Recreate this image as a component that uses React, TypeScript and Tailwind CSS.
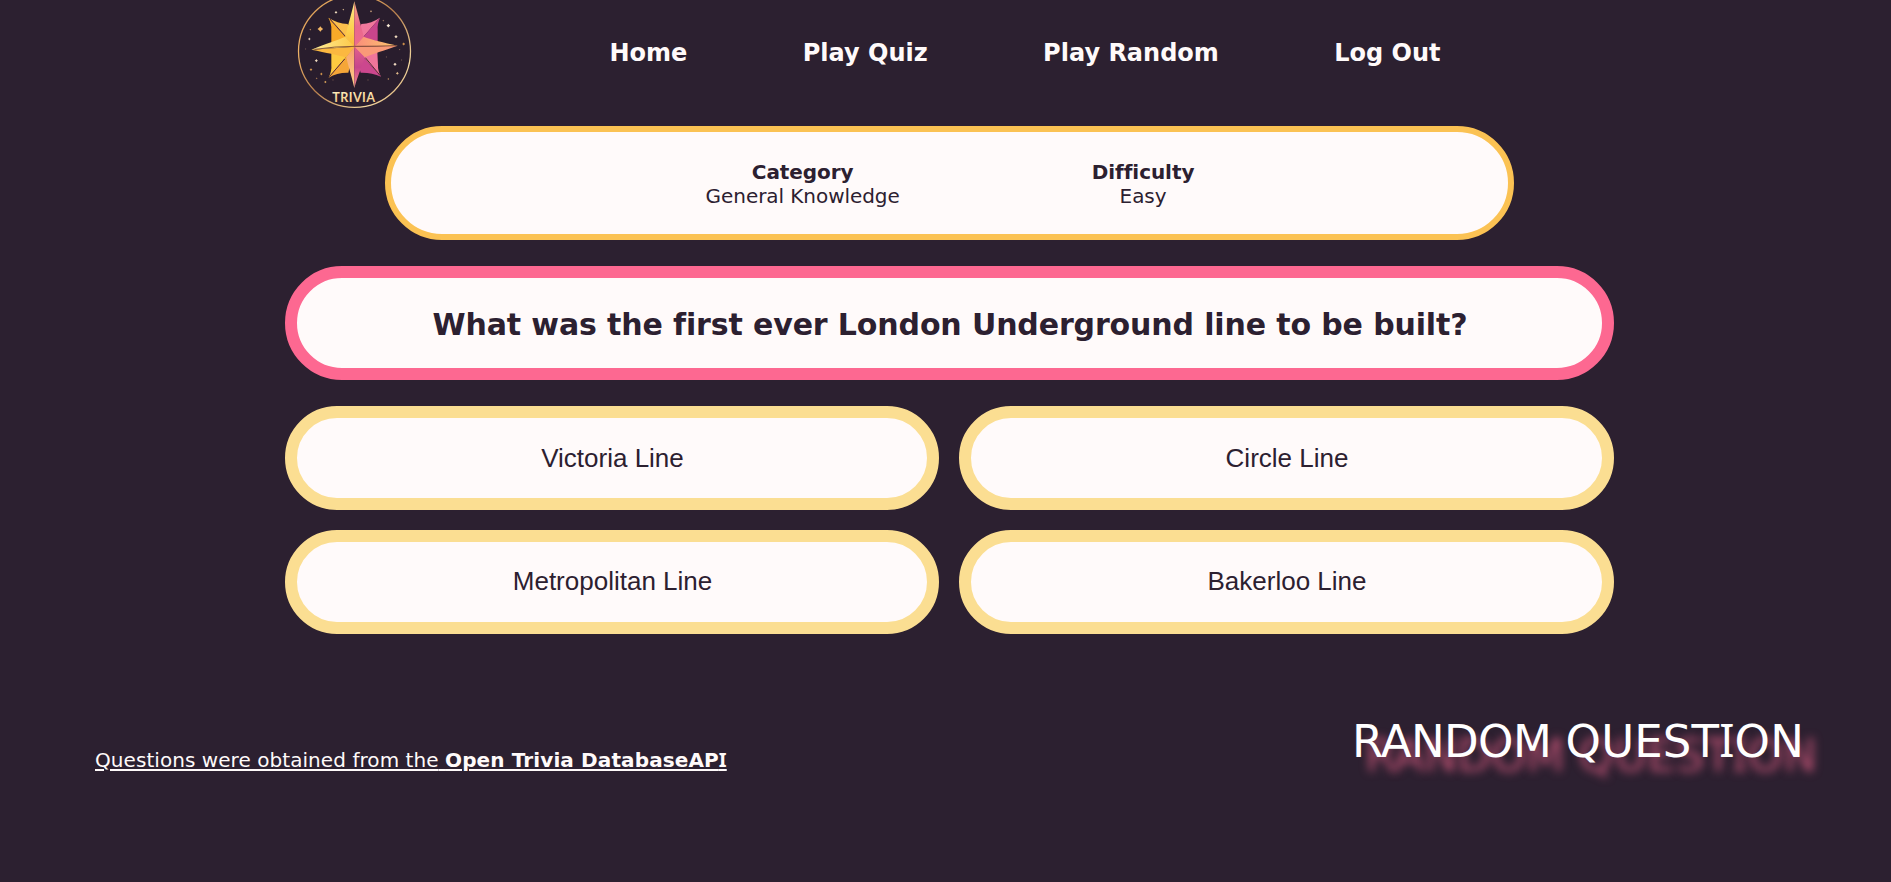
const navLinks = ["Home", "Play Quiz", "Play Random", "Log Out"];
const answerRows = [
  ["Victoria Line", "Circle Line"],
  ["Metropolitan Line", "Bakerloo Line"],
];

const stars: [number, number, number, string][] = [
  [168, 37, 3, "#f6e3c4"], [190, 29, 2, "#d9b98c"], [121, 87, 6, "#f3b765"], [91, 89, 2, "#b98a5c"],
  [88, 117, 3, "#e9d3bd"], [77, 147, 1.5, "#8d6f60"], [109, 182, 3.5, "#f0dcc0"], [93, 209, 3, "#d99a4e"],
  [124, 222, 3, "#d99a4e"], [136, 246, 2.8, "#e0a85c"], [110, 235, 2, "#a97c52"], [159, 240, 1.5, "#96705c"],
  [273, 34, 2.4, "#c9a07c"], [325, 77, 4, "#f8ead6"], [348, 110, 3.6, "#f4dfc2"], [310, 62, 2, "#a07b66"],
  [371, 132, 3.2, "#cf8f4c"], [359, 149, 1.5, "#9b7258"], [345, 193, 3.6, "#f1dcc2"], [352, 220, 3.2, "#e0b98a"],
  [319, 171, 1.5, "#8d6f60"], [325, 237, 2, "#b98a5c"], [264, 240, 1.5, "#96705c"], [365, 180, 1.5, "#8d6f60"],
];

function Logo() {
  return (
    <svg viewBox="0 0 450 360" className="block h-[120px] w-[150px] shrink-0" aria-label="Trivia">
      <defs>
        <linearGradient id="ring" x1="0" y1="0" x2="1" y2="1">
          <stop offset="0" stopColor="#c98a45" />
          <stop offset="0.25" stopColor="#f0b468" />
          <stop offset="0.5" stopColor="#b87f4c" />
          <stop offset="0.8" stopColor="#f4d9a0" />
          <stop offset="1" stopColor="#c58a55" />
        </linearGradient>
        <linearGradient id="topLeft" x1="0" y1="0" x2="0" y2="1">
          <stop offset="0" stopColor="#fde88a" />
          <stop offset="0.6" stopColor="#fdd250" />
          <stop offset="1" stopColor="#fbb83c" />
        </linearGradient>
        <linearGradient id="topRight" x1="0" y1="0" x2="0" y2="1">
          <stop offset="0" stopColor="#fba878" />
          <stop offset="0.55" stopColor="#e9688e" />
          <stop offset="1" stopColor="#ee6c8c" />
        </linearGradient>
        <linearGradient id="west" x1="0" y1="0" x2="1" y2="0">
          <stop offset="0" stopColor="#fff09a" />
          <stop offset="1" stopColor="#fcc848" />
        </linearGradient>
        <linearGradient id="east" x1="0" y1="0" x2="1" y2="0">
          <stop offset="0" stopColor="#fb8c7c" />
          <stop offset="1" stopColor="#fcc86c" />
        </linearGradient>
        <linearGradient id="bottom" x1="0" y1="0" x2="0" y2="1">
          <stop offset="0" stopColor="#f9a06c" />
          <stop offset="1" stopColor="#fbd08a" />
        </linearGradient>
        <linearGradient id="bottomRight" x1="0" y1="0" x2="0" y2="1">
          <stop offset="0" stopColor="#e0608c" />
          <stop offset="0.5" stopColor="#c8458c" />
          <stop offset="1" stopColor="#f58c88" />
        </linearGradient>
        <linearGradient id="word" x1="0" y1="0" x2="0" y2="1">
          <stop offset="0" stopColor="#fff2c4" />
          <stop offset="1" stopColor="#f0c27a" />
        </linearGradient>
      </defs>
      <circle cx="223.5" cy="154" r="168" fill="#291d2d" stroke="url(#ring)" strokeWidth="3.8" />
      {stars.map(([x, y, r, color]) => (
        <path
          key={`${x}-${y}`}
          fill={color}
          d={`M${x} ${y - r * 1.4}L${x + r * 0.6} ${y - r * 0.6}L${x + r * 1.4} ${y}L${x + r * 0.6} ${y + r * 0.6}L${x} ${y + r * 1.4}L${x - r * 0.6} ${y + r * 0.6}L${x - r * 1.4} ${y}L${x - r * 0.6} ${y - r * 0.6}Z`}
        />
      ))}
      <path d="M145 53Q172 70 203 72L223 142Z" fill="#fbc04c" />
      <path d="M145 53Q156 74 154 90L154 128L223 142Z" fill="#f9aa28" />
      <path d="M300 53Q275 70 244 72L223 142Z" fill="#f0789c" />
      <path d="M300 53Q291 74 293 90L293 128L223 142Z" fill="#c8458c" />
      <path d="M146 233Q156 212 154 196L154 156L223 142Z" fill="#fdca40" />
      <path d="M146 233Q172 217 205 218L223 142Z" fill="#f5a638" />
      <path d="M303 230Q293 212 294 196L292 156L223 142Z" fill="#f0759a" />
      <path d="M303 230Q275 217 242 218L223 142Z" fill="#cc478e" />
      <path d="M150 57L196 109M148 230L194 177M256 173L300 226" stroke="#5a2b36" strokeWidth="3" />
      <path d="M223 4C212 52 203 78 196 110L223 140Z" fill="url(#topLeft)" />
      <path d="M223 4C236 52 243 78 251 110L223 140Z" fill="url(#topRight)" />
      <path d="M94 149C140 130 172 121 196 110L224 140Z" fill="url(#west)" />
      <path d="M94 149C140 158 172 165 199 172L224 140Z" fill="#fbb840" />
      <path d="M353 137C310 127 276 120 251 110L223 140Z" fill="url(#east)" />
      <path d="M353 137C310 152 280 161 254 172L223 140Z" fill="#fa9a78" />
      <path d="M223 264C213 222 205 200 199 172L223 140Z" fill="url(#bottom)" />
      <path d="M223 264C235 222 247 200 254 172L223 140Z" fill="url(#bottomRight)" />
      <path d="M104 148Q165 139 223 139Q290 139 350 137" fill="none" stroke="#6b3a2c" strokeWidth="2.4" />
      <text
        x="157"
        y="305"
        textLength="128"
        lengthAdjust="spacing"
        fill="url(#word)"
        className="font-['Lato',sans-serif] text-[38px] font-bold"
      >
        TRIVIA
      </text>
    </svg>
  );
}

export default function App() {
  return (
    <div className="flex h-[882px] w-full flex-col overflow-hidden bg-[#2c2030] font-['DejaVu_Sans',Verdana,sans-serif] text-[#fffafa]">
      <header className="flex h-[126px] shrink-0 pl-[280px]">
        <Logo />
        <nav className="ml-[179.5px] flex gap-[115.4px] pt-[39px] text-2xl leading-[28px] font-bold whitespace-nowrap">
          {navLinks.map((label) => (
            <a key={label} href="#">{label}</a>
          ))}
        </nav>
      </header>

      <main className="ml-[285px] flex w-[1329px] shrink-0 flex-col text-[#2c2030]">
        <section className="mx-[100px] flex h-[114px] justify-center gap-[192px] rounded-full border-6 border-[#fbc253] bg-[#fffafa] pt-[28px] pl-px text-center text-[20px] leading-[24px] tracking-[-0.06px]">
          <div>
            <h3 className="font-bold">Category</h3>
            <p>General Knowledge</p>
          </div>
          <div>
            <h3 className="font-bold">Difficulty</h3>
            <p>Easy</p>
          </div>
        </section>

        <h2 className="mt-[26px] flex h-[114px] items-center justify-center rounded-full border-12 border-[#fd6891] bg-[#fffafa] pt-[2px] pl-px text-[30px] font-bold tracking-[-0.13px] whitespace-nowrap">
          What was the first ever London Underground line to be built?
        </h2>

        <div className="mt-[26px] flex flex-col gap-5">
          {answerRows.map((row, index) => (
            <div key={row[0]} className="grid grid-cols-[654px_655px] gap-5">
              {row.map((answer) => (
                <button
                  key={answer}
                  className={`h-[104px] rounded-full border-12 border-[#fbde92] bg-[#fffafa] pl-px font-['Liberation_Sans',Arial,sans-serif] text-[26px] ${index === 1 ? "pb-[2px]" : ""}`}
                >
                  {answer}
                </button>
              ))}
            </div>
          ))}
        </div>
      </main>

      <footer className="flex justify-between pt-[75px] pr-[87px] pl-[95px] whitespace-nowrap">
        <a href="#" className="pt-[37px] text-[20px] leading-[28px] tracking-[0.06px] underline decoration-2 underline-offset-2">
          Questions were obtained from the{" "}
          <strong className="tracking-[0.12px]">
            Open Trivia DatabaseAP<span className="font-['Noto_Sans',sans-serif]">I</span>
          </strong>
        </a>
        <p className="text-[45px] leading-[62px] tracking-[0.15px] text-white [text-shadow:13px_14px_10px_rgba(253,104,145,0.7)]">
          <span className="tracking-[-0.6px]">RANDOM</span> QUEST<span className="font-['Noto_Sans',sans-serif]">I</span>ON
        </p>
      </footer>
    </div>
  );
}
